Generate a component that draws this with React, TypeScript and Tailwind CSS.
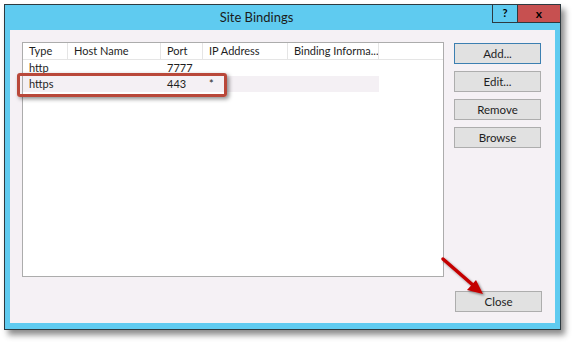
import React from "react";

const cols = [
  { label: "Type", w: "w-[45px]" },
  { label: "Host Name", w: "w-[93px]" },
  { label: "Port", w: "w-[42px]" },
  { label: "IP Address", w: "w-[85px]" },
  { label: "Binding Informa...", w: "w-[91px]" },
];

const rows = [
  ["http", "", "7777", "", ""],
  ["https", "", "443", "*", ""],
];

function Btn({ children, focused }: { children: React.ReactNode; focused?: boolean }) {
  return (
    <div
      className={
        "h-[21px] w-[87px] flex items-center justify-center bg-[#e1e1e1] border text-[11.5px] text-[#1e1e1e] " +
        (focused ? "border-[#3c7fb1]" : "border-[#adadad]")
      }
    >
      {children}
    </div>
  );
}

export default function App() {
  return (
    <div
      className="relative w-[574px] h-[344px] bg-white overflow-hidden"
      style={{ fontFamily: 'Lato, "Noto Sans", sans-serif' }}
    >
      <div className="absolute left-[4px] top-[4px] w-[557px] h-[326px] border border-[#2d3a40] bg-[#5fcbf0] flex flex-col shadow-[4px_5px_6px_rgba(0,0,0,0.45)]">
        {/* title bar */}
        <div className="relative h-[25px] flex items-center justify-center pr-[52px] text-[13px] text-[#1b1b1b]">
          Site Bindings
          <div className="absolute right-[-1px] top-[-1px] flex h-[19px]">
            <div className="w-[26px] h-full border border-[#2d3a40] bg-[#5fcbf0] flex items-center justify-center text-[11px] font-bold text-black">
              ?
            </div>
            <div className="w-[43px] h-full border border-l-0 border-[#2d3a40] bg-[#c75050] flex items-center justify-center text-[12px] font-bold text-black">
              x
            </div>
          </div>
        </div>
        {/* client */}
        <div className="mx-[5px] mb-[6px] flex-1 bg-[#f5f1f5] flex flex-col pt-[12px] pl-[12px] pr-[13px] pb-[11px]">
          <div className="flex gap-[10px]">
            <div className="w-[422px] h-[235px] bg-white border border-[#acacac] text-[11px] text-[#1e1e1e]">
              <div className="flex h-[17px] border-b border-[#e5e5e5]">
                {cols.map((c) => (
                  <div
                    key={c.label}
                    className={c.w + " border-r border-[#e5e5e5] pl-[6px] leading-[16px] whitespace-nowrap overflow-hidden"}
                  >
                    {c.label}
                  </div>
                ))}
              </div>
              {rows.map((r, i) => (
                <div
                  key={i}
                  className={"flex h-[16px] w-[356px] " + (i === 1 ? "bg-[#f4f0f4]" : "")}
                >
                  {r.map((v, j) => (
                    <div key={j} className={cols[j].w + " pl-[6px] leading-[16px] whitespace-nowrap"}>
                      {v}
                    </div>
                  ))}
                </div>
              ))}
            </div>
            <div className="flex flex-col gap-[7px] pt-[1px]">
              <Btn focused>Add...</Btn>
              <Btn>Edit...</Btn>
              <Btn>Remove</Btn>
              <Btn>Browse</Btn>
            </div>
          </div>
          <div className="mt-auto flex justify-end">
            <Btn>Close</Btn>
          </div>
        </div>
      </div>

      {/* highlight annotation */}
      <div className="absolute left-[17px] top-[73px] w-[210px] h-[24px] border-[3px] border-[#b9483a] rounded-[3px] shadow-[2px_2px_4px_rgba(0,0,0,0.45)]" />

      {/* arrow annotation */}
      <svg className="absolute left-[436px] top-[252px]" width="56" height="52" viewBox="0 0 56 52">
        <defs>
          <filter id="sh" x="-20%" y="-20%" width="160%" height="160%">
            <feDropShadow dx="1.5" dy="1.5" stdDeviation="1.2" floodColor="#000" floodOpacity="0.45" />
          </filter>
        </defs>
        <g filter="url(#sh)">
          <line x1="7" y1="7" x2="38" y2="34" stroke="#c40000" strokeWidth="3.5" strokeLinecap="round" />
          <polygon points="47,42 31,38 40,28" fill="#c40000" />
        </g>
      </svg>
    </div>
  );
}
